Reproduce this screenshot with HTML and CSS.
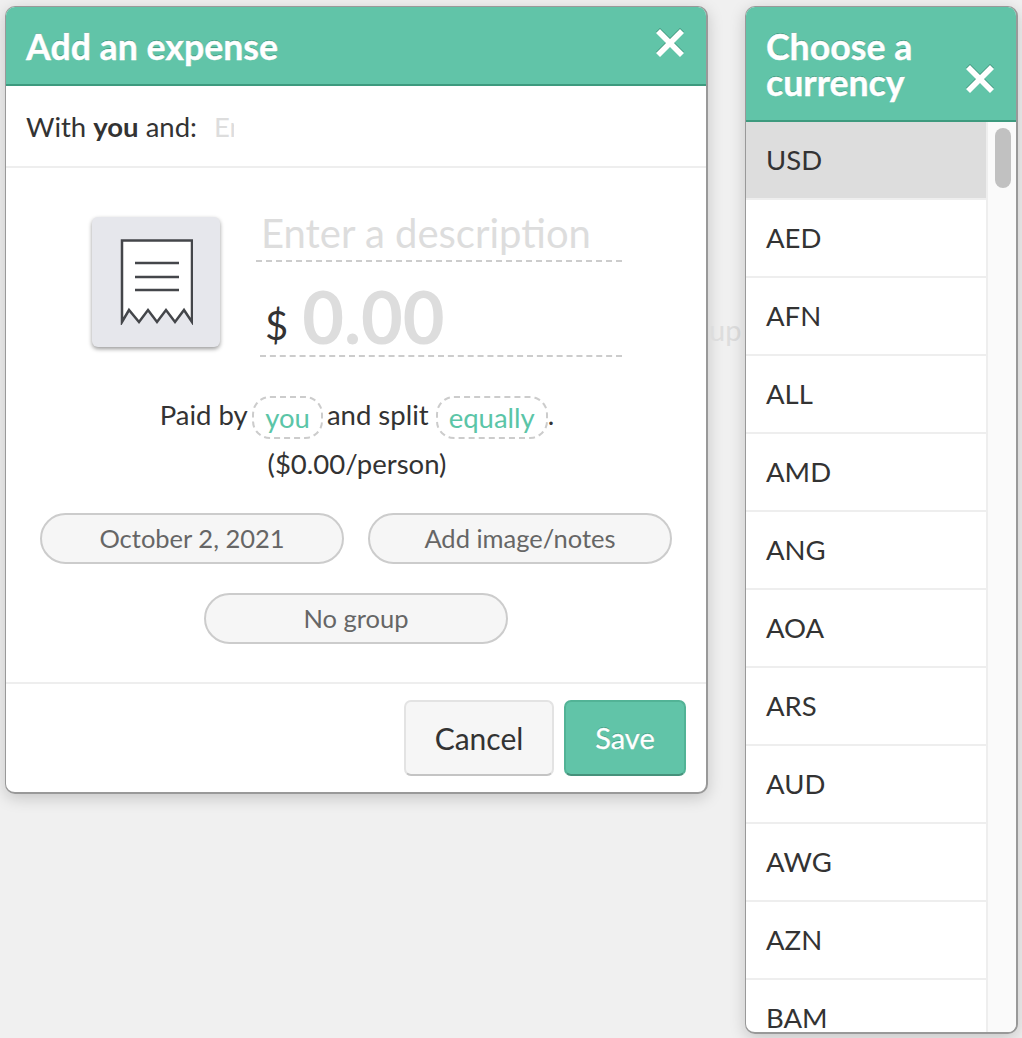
FILE: index.html
```html
<!DOCTYPE html>
<html>
  <head>
    <meta charset="utf-8">
    <title>Add an expense</title>
    <link rel="stylesheet" href="styles.css">
  </head>
  <body>
    <div class="expense modal">
      <div class="modal-head">
        <h2>Add an expense</h2>
        <svg class="close" viewBox="0 0 28 28"><path d="M4 0 14 10 24 0 28 4 18 14 28 24 24 28 14 18 4 28 0 24 10 14 0 4Z"/></svg>
      </div>
      <div class="with-row">
        <span>With <b>you</b> and:</span>
        <span class="names">En</span>
      </div>
      <div class="main-fields">
        <div class="receipt-tile">
          <svg viewBox="0 0 74 86" width="74" height="86">
            <path class="paper" d="M3 1.500H73V83L65 71 56 83 47 71 38 83 29 71 20 83 10 71 3 83Z"/>
            <path class="lines" d="M16 24H60M16 38H60M16 51H60"/>
          </svg>
        </div>
        <div class="inputs">
          <div class="description">Enter a description</div>
          <div class="amount"><span class="dollar">$</span><span class="zero">0.00</span></div>
        </div>
      </div>
      <div class="split">
        <div>Paid by <a class="chip chip-you">you</a> and split <a class="chip">equally</a>.</div>
        <div class="per-person">($0.00/person)</div>
      </div>
      <div class="pills">
        <a class="pill">October 2, 2021</a>
        <a class="pill">Add image/notes</a>
        <a class="pill">No group</a>
      </div>
      <div class="modal-foot">
        <a class="btn">Cancel</a>
        <a class="btn btn-save">Save</a>
      </div>
    </div>

    <div class="behind">up</div>

    <div class="currency modal">
      <div class="modal-head">
        <h2>Choose a currency</h2>
        <svg class="close" viewBox="0 0 28 28"><path d="M4 0 14 10 24 0 28 4 18 14 28 24 24 28 14 18 4 28 0 24 10 14 0 4Z"/></svg>
      </div>
      <div class="currency-body">
        <ul class="currency-list">
          <li class="selected">USD</li>
          <li>AED</li>
          <li>AFN</li>
          <li>ALL</li>
          <li>AMD</li>
          <li>ANG</li>
          <li>AOA</li>
          <li>ARS</li>
          <li>AUD</li>
          <li>AWG</li>
          <li>AZN</li>
          <li>BAM</li>
        </ul>
        <div class="scroll-track"><div class="scroll-thumb"></div></div>
      </div>
    </div>
  </body>
</html>
```

FILE: styles.css
```css
html, body {
  margin: 0;
  height: 100%;
}

body {
  display: flex;
  align-items: flex-start;
  box-sizing: border-box;
  height: 1038px;
  padding: 6px 0 0 5px;
  overflow: hidden;
  background: #f0f0f0;
  color: #333;
  font-family: Lato, sans-serif;
  font-size: 27.5px;
}

.modal {
  box-sizing: border-box;
  background: #fff;
  border: 1px solid #999;
  border-width: 1px 2px 2px 1px;
  border-radius: 10px;
  overflow: hidden;
  box-shadow: 0 4px 16px rgba(0, 0, 0, 0.18);
}

.modal-head {
  display: flex;
  justify-content: space-between;
  background: #61c4a8;
  border-bottom: 2px solid #3d9a7e;
  color: #fff;
}

.modal-head h2 {
  margin: 0;
  font-size: 35.700px;
  font-weight: 700;
  line-height: 36px;
  -webkit-text-stroke: 0.4px #fff;
  text-shadow: 0 -1px 0 rgba(30, 110, 85, 0.55);
}

.close {
  flex: none;
  width: 28px;
  height: 28px;
  fill: #fff;
  filter: drop-shadow(0 -1px 0 rgba(30, 110, 85, 0.6));
}

/* left dialog */
.expense {
  width: 703px;
  height: 788px;
}

.expense .modal-head {
  height: 79px;
  box-sizing: border-box;
  padding: 22px 22px 0 20px;
}

.with-row {
  display: flex;
  align-items: center;
  height: 80px;
  padding-left: 20px;
  border-bottom: 2px solid #eee;
}

.names {
  width: 20px;
  margin-left: 17px;
  overflow: hidden;
  color: #ddd;
}

.main-fields {
  display: flex;
  padding: 49px 0 0 86px;
}

.receipt-tile {
  display: flex;
  align-items: center;
  justify-content: center;
  width: 128px;
  height: 130px;
  background: #e6e7ec;
  border-radius: 6px;
  box-shadow: 0 2px 4px rgba(0, 0, 0, 0.4);
}

.paper {
  fill: #fff;
  stroke: #44464a;
  stroke-width: 2.500;
}

.lines {
  fill: none;
  stroke: #44464a;
  stroke-width: 2.500;
}

.inputs {
  width: 366px;
  margin: -6px 0 0 36px;
}

.description {
  height: 49px;
  padding-left: 5px;
  border-bottom: 2px dashed #ccc;
  color: #ddd;
  font-size: 40px;
  line-height: 45px;
}

.amount {
  display: flex;
  align-items: flex-start;
  height: 93px;
  margin-left: 4px;
  padding-left: 5px;
  border-bottom: 2px dashed #ccc;
}

.dollar {
  margin-right: 14px;
  font-size: 40px;
  line-height: 127px;
}

.zero {
  color: #ddd;
  font-size: 72px;
  font-weight: 700;
  line-height: 108px;
}

.split {
  margin-top: 37px;
  width: 702px;
  text-align: center;
  line-height: 42px;
}

.per-person {
  margin-top: 4px;
}

.chip {
  display: inline-block;
  box-sizing: border-box;
  height: 43px;
  padding: 0 11px;
  border: 2px dashed #ccc;
  border-radius: 18px;
  color: #5bc5a7;
  line-height: 40px;
  vertical-align: -3px;
}

.chip-you {
  margin: 0 -3px 0 -2px;
}

.pills {
  display: flex;
  flex-wrap: wrap;
  justify-content: center;
  gap: 29px 24px;
  margin-top: 28px;
  width: 700px;
}

.pill {
  box-sizing: border-box;
  width: 304px;
  height: 51px;
  background: #f6f6f6;
  border: 2px solid #ccc;
  border-radius: 26px;
  color: #666;
  font-size: 25.500px;
  text-align: center;
  line-height: 47px;
}

.modal-foot {
  display: flex;
  justify-content: flex-end;
  gap: 10px;
  margin-top: 38px;
  padding: 16px 20px 0 0;
  border-top: 2px solid #eee;
}

.btn {
  box-sizing: border-box;
  width: 150px;
  height: 76px;
  background: #f6f6f6;
  border: 2px solid #e3e3e3;
  border-bottom-color: #c4c4c4;
  border-radius: 7px;
  font-size: 30px;
  text-align: center;
  line-height: 72px;
}

.btn-save {
  width: 122px;
  background: #61c4a8;
  border-color: #52b396;
  border-bottom-color: #46917b;
  color: #fff;
  font-size: 29px;
  -webkit-text-stroke: 0.3px #fff;
  text-shadow: 0 -1px 0 rgba(30, 110, 85, 0.5);
}

/* text of the page behind the dialogs */
.behind {
  flex: none;
  width: 37px;
  padding: 308px 0 0 1px;
  box-sizing: border-box;
  overflow: hidden;
  color: #ddd;
  font-size: 29px;
  line-height: 32px;
}

/* right dialog */
.currency {
  display: flex;
  flex-direction: column;
  width: 273px;
  height: 1028px;
}

.currency .modal-head {
  height: 115px;
  flex: none;
  box-sizing: border-box;
  padding: 22px 22px 0 20px;
}

.currency .modal-head .close {
  margin-top: 36px;
}

.currency-body {
  display: flex;
  flex: 1;
  min-height: 0;
}

.currency-list {
  flex: 1;
  margin: 0;
  padding: 0;
  overflow: hidden;
  list-style: none;
}

.currency-list li {
  box-sizing: border-box;
  height: 78px;
  padding-left: 20px;
  border-bottom: 2px solid #eee;
  line-height: 76px;
}

.currency-list .selected {
  background: #ddd;
}

.scroll-track {
  flex: none;
  box-sizing: border-box;
  width: 30px;
  padding: 6px 7px;
  background: #fafafa;
  border-left: 2px solid #eee;
}

.scroll-thumb {
  width: 16px;
  height: 60px;
  background: #c1c1c1;
  border-radius: 8px;
}
```
